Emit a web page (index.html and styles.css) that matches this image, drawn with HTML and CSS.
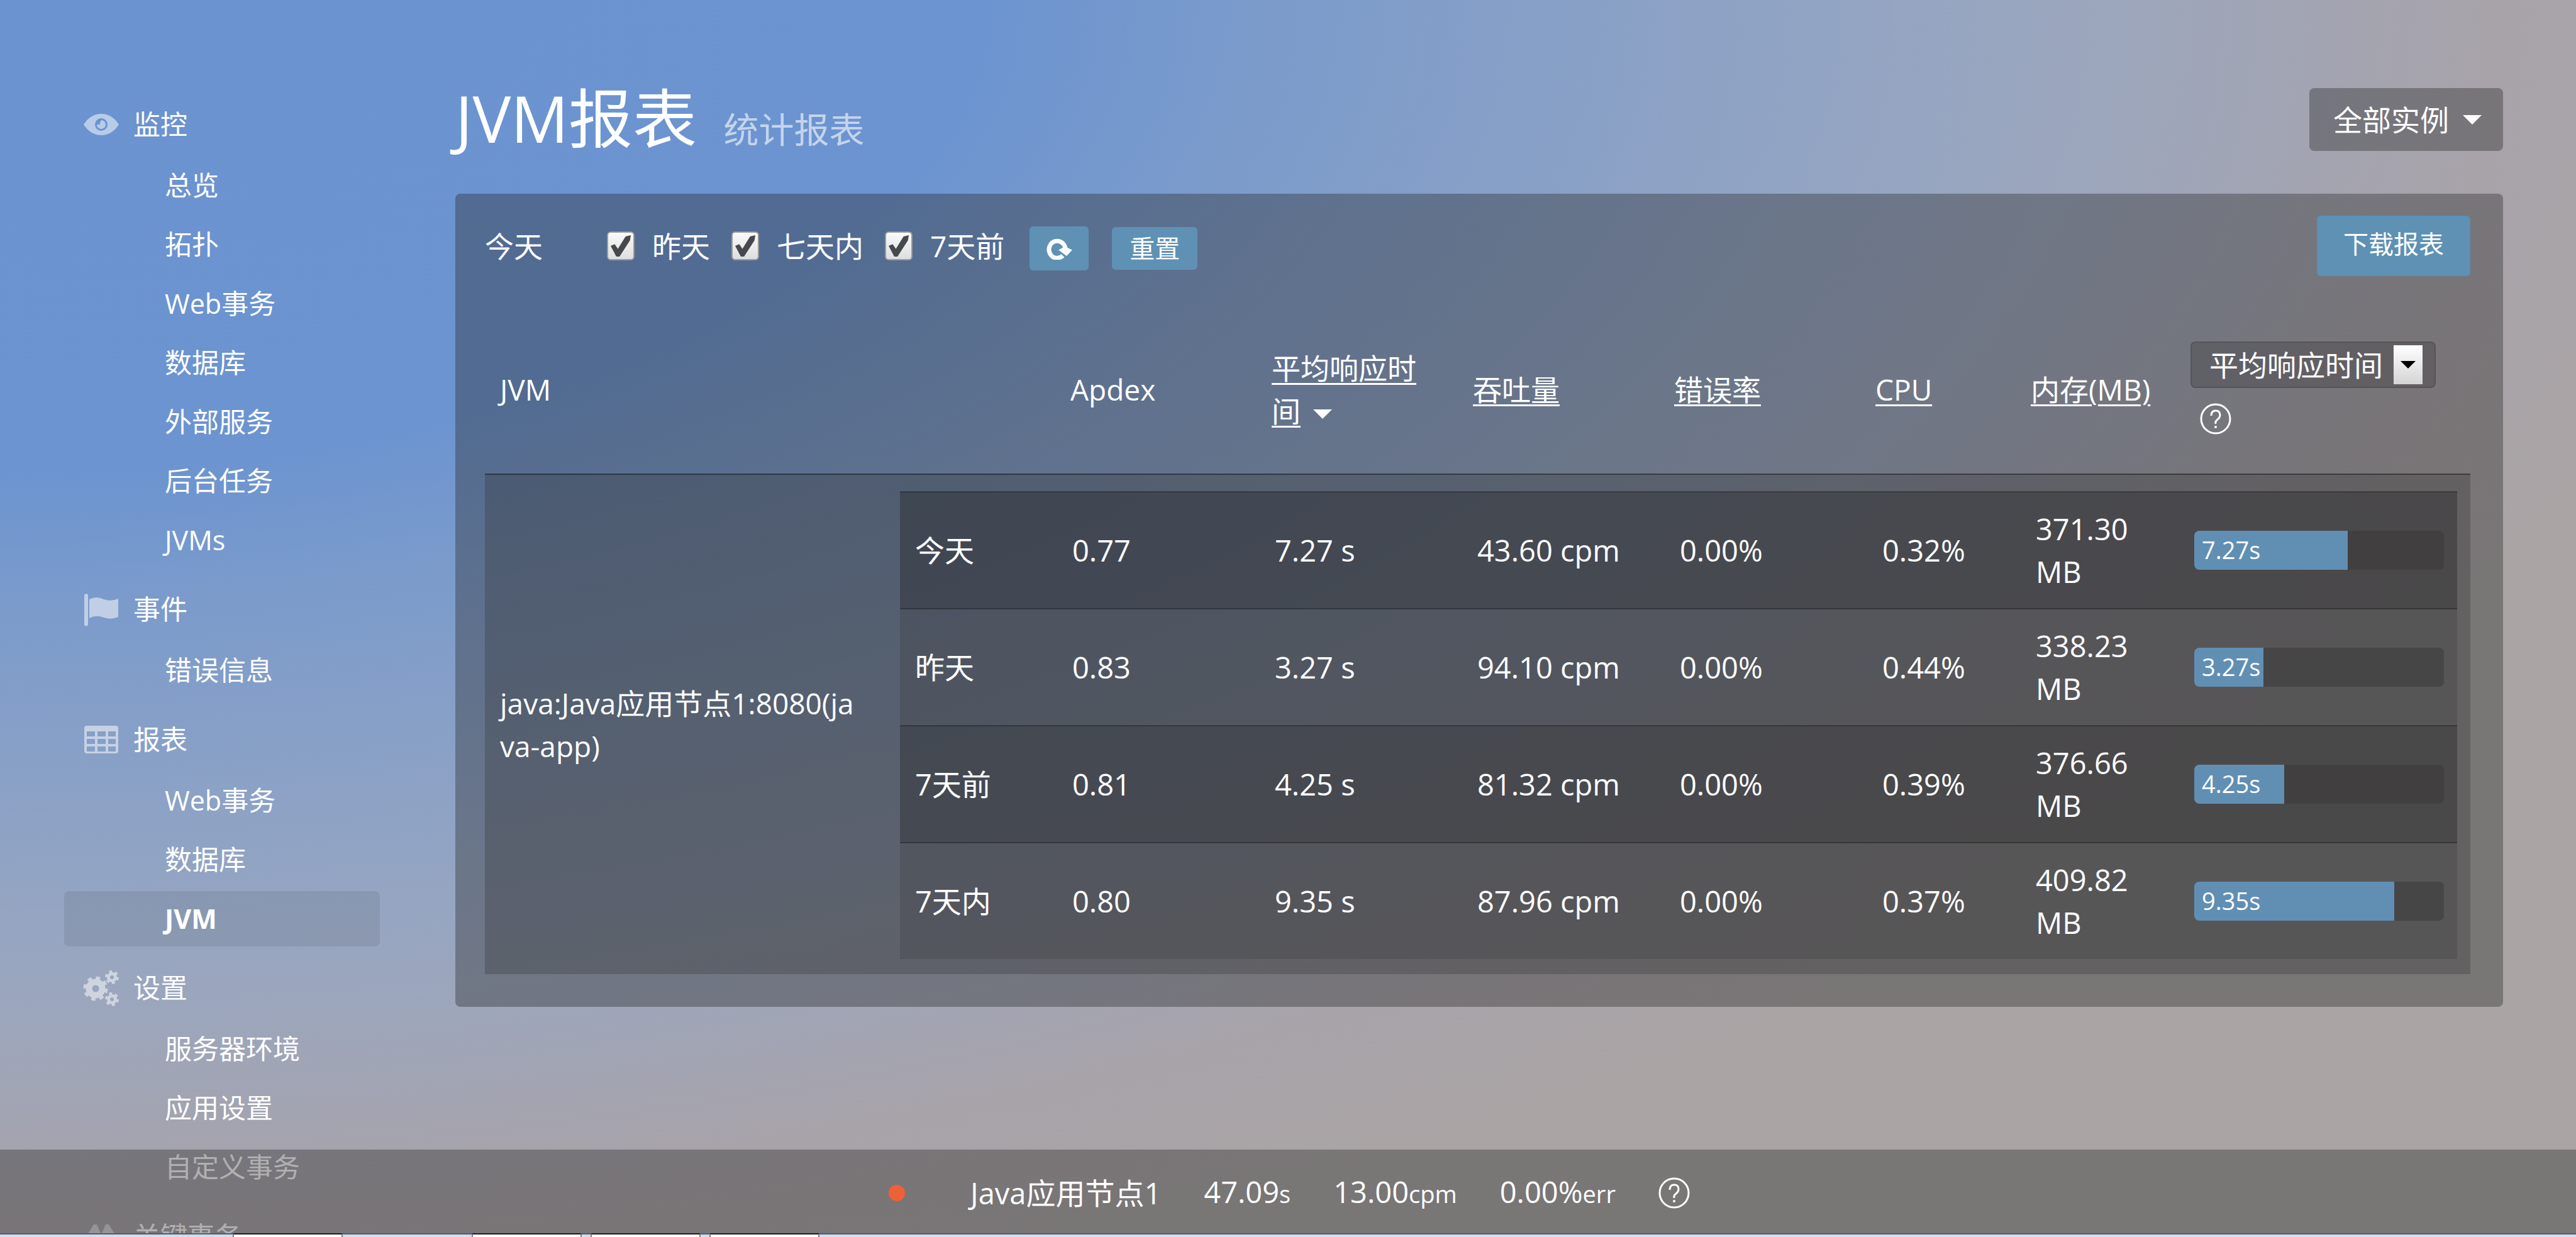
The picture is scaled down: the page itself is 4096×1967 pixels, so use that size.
FILE: index.html
```html
<!DOCTYPE html>
<html lang="zh-CN">
<head>
<meta charset="utf-8">
<title>JVM报表</title>
<link rel="stylesheet" href="styles.css">
</head>
<body>
<div class="viewport">
  <div class="layout">
    <nav class="sidebar">
      <section class="nav-group">
        <h2 class="nav-title">
          <svg class="nav-icon" viewBox="0 0 58 58"><path fill-rule="evenodd" d="M1 29Q12 12 29 12T57 29Q46 46 29 46T1 29ZM29 19a10 10 0 1 0 0 20a10 10 0 1 0 0-20ZM29 22a7 7 0 1 1 0 14a7 7 0 0 1-7-7h5v-3z"/></svg>
          监控
        </h2>
        <a class="nav-item" href="#">总览</a>
        <a class="nav-item" href="#">拓扑</a>
        <a class="nav-item" href="#">Web事务</a>
        <a class="nav-item" href="#">数据库</a>
        <a class="nav-item" href="#">外部服务</a>
        <a class="nav-item" href="#">后台任务</a>
        <a class="nav-item" href="#">JVMs</a>
      </section>
      <section class="nav-group">
        <h2 class="nav-title">
          <svg class="nav-icon" viewBox="0 0 58 58"><path d="M2 6q3-4 6 0v48q-3 3-6 0zM10 13q11-6 23 0q11 4 23-1v29q-11 5-23 1q-12-5-23 1z"/></svg>
          事件
        </h2>
        <a class="nav-item" href="#">错误信息</a>
      </section>
      <section class="nav-group">
        <h2 class="nav-title">
          <svg class="nav-icon" viewBox="0 0 58 58"><path fill-rule="evenodd" d="M6 7h46q4 0 4 4v36q0 4-4 4H6q-4 0-4-4V11q0-4 4-4ZM6 16v8h13v-8ZM23 16v8h13v-8ZM40 16v8h12v-8ZM6 28v8h13v-8ZM23 28v8h13v-8ZM40 28v8h12v-8ZM6 40v8h13v-8ZM23 40v8h13v-8ZM40 40v8h12v-8Z"/></svg>
          报表
        </h2>
        <a class="nav-item" href="#">Web事务</a>
        <a class="nav-item" href="#">数据库</a>
        <a class="nav-item nav-item-active" href="#">JVM</a>
      </section>
      <section class="nav-group">
        <h2 class="nav-title">
          <svg class="nav-icon" viewBox="0 0 58 58">
            <g fill="none" stroke="#fff">
              <circle cx="20" cy="30" r="10.500" stroke-width="10"/>
              <circle cx="20" cy="30" r="17" stroke-width="5" stroke-dasharray="6.700 6.650"/>
              <circle cx="46" cy="12" r="5.500" stroke-width="5"/>
              <circle cx="46" cy="12" r="9" stroke-width="4" stroke-dasharray="4.700 4.720"/>
              <circle cx="46" cy="47" r="5.500" stroke-width="5"/>
              <circle cx="46" cy="47" r="9" stroke-width="4" stroke-dasharray="4.700 4.720"/>
            </g>
          </svg>
          设置
        </h2>
        <a class="nav-item" href="#">服务器环境</a>
        <a class="nav-item" href="#">应用设置</a>
        <a class="nav-item" href="#">自定义事务</a>
      </section>
      <section class="nav-group">
        <h2 class="nav-title">
          <svg class="nav-icon" viewBox="0 0 58 58"><path d="M6 52V28L17 10h5l6 14v28zM30 52V24l6-14h5l11 18v24z"/></svg>
          关键事务
        </h2>
      </section>
    </nav>

    <main class="content">
      <header class="page-head">
        <h1 class="page-title">JVM报表 <small class="page-subtitle">统计报表</small></h1>
        <button class="instance-button" type="button">全部实例 <span class="caret"></span></button>
      </header>

      <section class="panel">
        <form class="toolbar">
          <span class="toolbar-today">今天</span>
          <label class="check"><input class="check-box" type="checkbox" checked>昨天</label>
          <label class="check"><input class="check-box" type="checkbox" checked>七天内</label>
          <label class="check"><input class="check-box" type="checkbox" checked>7天前</label>
          <button class="button button-refresh" type="button" aria-label="刷新">
            <svg class="refresh-icon" viewBox="0 0 42 36"><path d="M27 29.500A13 13.500 0 1 1 31 20" fill="none" stroke="#fff" stroke-width="7"/><path d="M20 20.500L30 15L42 20.500L33 30Z" fill="#fff"/></svg>
          </button>
          <button class="button button-reset" type="button">重置</button>
          <button class="button button-download" type="button">下载报表</button>
        </form>

        <table class="report">
          <colgroup>
            <col>
            <col class="col-lead">
            <col class="col-metric">
            <col class="col-metric">
            <col class="col-metric">
            <col class="col-metric">
            <col class="col-cpu">
            <col class="col-memory">
            <col class="col-chart">
          </colgroup>
          <thead>
            <tr>
              <th colspan="2">JVM</th>
              <th>Apdex</th>
              <th><a class="sort" href="#">平均响应时间</a> <span class="caret caret-sort"></span></th>
              <th><a class="sort" href="#">吞吐量</a></th>
              <th><a class="sort" href="#">错误率</a></th>
              <th><a class="sort" href="#">CPU</a></th>
              <th><a class="sort" href="#">内存(MB)</a></th>
              <th>
                <div class="chart-head">
                  <div class="metric-picker">
                    <select class="metric-select" aria-label="图表指标"><option>平均响应时间</option></select>
                    <span class="metric-arrow"></span>
                  </div>
                  <svg class="help-icon help-icon-inset" viewBox="0 0 50 50"><circle cx="25" cy="25" r="23" fill="none" stroke="#fff" stroke-width="3"/><path d="M18 20q0-8 7-8t7 7q0 4-4 7t-3 7" fill="none" stroke="#fff" stroke-width="3"/><circle cx="25" cy="38" r="2" fill="#fff"/></svg>
                </div>
              </th>
            </tr>
          </thead>
          <tbody>
            <tr class="report-row">
              <td class="jvm-name">java:Java应用节点1:8080(java-app)</td>
              <td class="periods-cell" colspan="8">
                <table class="periods">
                  <colgroup>
                    <col>
                    <col class="col-value">
                    <col class="col-value">
                    <col class="col-value">
                    <col class="col-value">
                    <col class="col-period-cpu">
                    <col class="col-period-memory">
                    <col class="col-period-chart">
                  </colgroup>
                  <tbody>
                    <tr><td>今天</td><td>0.77</td><td>7.27 s</td><td>43.60 cpm</td><td>0.00%</td><td>0.32%</td><td>371.30 MB</td><td><div class="bar"><div class="bar-fill" style="width:61.4%">7.27s</div></div></td></tr>
                    <tr><td>昨天</td><td>0.83</td><td>3.27 s</td><td>94.10 cpm</td><td>0.00%</td><td>0.44%</td><td>338.23 MB</td><td><div class="bar"><div class="bar-fill" style="width:27.7%">3.27s</div></div></td></tr>
                    <tr><td>7天前</td><td>0.81</td><td>4.25 s</td><td>81.32 cpm</td><td>0.00%</td><td>0.39%</td><td>376.66 MB</td><td><div class="bar"><div class="bar-fill" style="width:36%">4.25s</div></div></td></tr>
                    <tr><td>7天内</td><td>0.80</td><td>9.35 s</td><td>87.96 cpm</td><td>0.00%</td><td>0.37%</td><td>409.82 MB</td><td><div class="bar"><div class="bar-fill" style="width:80%">9.35s</div></div></td></tr>
                  </tbody>
                </table>
              </td>
            </tr>
          </tbody>
        </table>
      </section>
    </main>
  </div>

  <footer class="status">
    <span class="status-dot"></span>
    <span>Java应用节点1</span>
    <span>47.09<span class="unit">s</span></span>
    <span>13.00<span class="unit">cpm</span></span>
    <span>0.00%<span class="unit">err</span></span>
    <svg class="help-icon" viewBox="0 0 50 50"><circle cx="25" cy="25" r="23" fill="none" stroke="#fff" stroke-width="3"/><path d="M18 20q0-8 7-8t7 7q0 4-4 7t-3 7" fill="none" stroke="#fff" stroke-width="3"/><circle cx="25" cy="38" r="2" fill="#fff"/></svg>
  </footer>
</div>
<div class="taskbar">
  <span class="task task-first"></span>
  <span class="task"></span>
  <span class="task"></span>
  <span class="task"></span>
</div>
</body>
</html>
```
FILE: styles.css
```css
* {
  box-sizing: border-box;
}

body {
  margin: 0;
  height: 100vh;
  display: flex;
  flex-direction: column;
  overflow: hidden;
  font: 46px/68px "Open Sans", "Noto Sans CJK SC", sans-serif;
  color: #fff;
  background: radial-gradient(ellipse 100% 100% at 0 0,
    #6b93cf 0%, #6c94d0 38%, #7b9bcb 49%, #8aa1c6 63%,
    #95a5c2 74%, #9ba6bd 81%, #a2a4b2 90%, #a8a3a9 97%, #aaa4a5 108%);
}

a {
  color: inherit;
  text-decoration: none;
}

button,
select {
  font: inherit;
  color: inherit;
  border: 0;
}

/* Page frame */
.viewport {
  position: relative;
  flex: 1;
  min-height: 0;
  overflow: hidden;
}

.layout {
  display: grid;
  grid-template-columns: 502px minmax(0, 1fr);
  gap: 120px;
  align-items: start;
  padding: 140px 116px 0 102px;
}

/* Sidebar */
.sidebar {
  display: flex;
  flex-direction: column;
  gap: 13px;
  padding-top: 8px;
  font-size: 43px;
}

.nav-group {
  display: flex;
  flex-direction: column;
}

.nav-title {
  display: flex;
  align-items: center;
  gap: 22px;
  height: 100px;
  margin: 0;
  padding-left: 30px;
  font-size: 43px;
  font-weight: 400;
}

.nav-icon {
  width: 58px;
  height: 58px;
  fill: #fff;
  opacity: 0.52;
}

.nav-item {
  display: flex;
  align-items: center;
  height: 88px;
  margin: 3px 0;
  padding-left: 160px;
  border-radius: 8px;
}

.nav-item-active {
  background: rgba(0, 0, 0, 0.08);
  font-weight: 700;
}

/* Page heading */
.page-head {
  display: flex;
  align-items: center;
  justify-content: space-between;
  height: 100px;
  margin-bottom: 68px;
}

.page-title {
  margin: 0;
  padding-top: 12px;
  font-size: 102px;
  font-weight: 400;
  line-height: 100px;
}

.page-subtitle {
  margin-left: 16px;
  font-size: 56px;
  color: rgba(255, 255, 255, 0.6);
}

.instance-button {
  display: flex;
  align-items: center;
  gap: 22px;
  height: 100px;
  padding: 0 34px 0 38px;
  border-radius: 8px;
  background: rgba(37, 37, 37, 0.36);
}

.caret {
  display: inline-block;
  border: 15px solid transparent;
  border-top-color: #fff;
  border-bottom: 0;
  vertical-align: middle;
}

.caret-sort {
  margin-left: 8px;
}

/* Report panel */
.panel {
  padding: 35px 52px 52px 47px;
  border-radius: 8px;
  background: rgba(37, 37, 37, 0.36);
}

.toolbar {
  display: flex;
  align-items: center;
  height: 96px;
}

.toolbar-today {
  margin-right: 102px;
}

.check {
  display: flex;
  align-items: center;
  gap: 28px;
  margin-right: 34px;
}

.check-box {
  appearance: none;
  display: grid;
  place-items: center;
  width: 44px;
  height: 46px;
  margin: 0;
  border: 2px solid #9a9a9a;
  border-radius: 6px;
  background: linear-gradient(#fafafa, #dedede);
}

.check-box:checked::after {
  content: "";
  width: 32px;
  height: 34px;
  background: #45484c;
  clip-path: polygon(0 50%, 20% 42%, 36% 64%, 74% 6%, 100% 0, 96% 24%, 44% 100%, 28% 100%);
}

.button {
  border-radius: 6px;
  background: #5e91b4;
  font-size: 40px;
}

.button-refresh {
  display: grid;
  place-items: center;
  width: 94px;
  height: 70px;
  margin-left: 6px;
  margin-top: 8px;
  padding: 0;
}

.refresh-icon {
  width: 42px;
  height: 36px;
}

.button-reset {
  height: 68px;
  margin-left: 37px;
  margin-top: 8px;
  padding: 0 28px;
}

.button-download {
  height: 96px;
  margin-left: auto;
  padding: 0 40px 6px;
  border: 2px solid #5592b9;
}

/* Outer table */
.report,
.periods {
  width: 100%;
  border-collapse: collapse;
  table-layout: fixed;
}

.report {
  margin-top: 51px;
}

.report th {
  height: 264px;
  padding: 0 24px 6px;
  font-weight: 400;
  text-align: left;
  vertical-align: middle;
}

.report td {
  padding: 24px;
  vertical-align: middle;
}

.col-lead {
  width: 271px;
}

.col-metric {
  width: 320px;
}

.col-cpu {
  width: 247px;
}

.col-memory {
  width: 254px;
}

.col-chart {
  width: 469px;
}

.sort {
  text-decoration: underline;
  text-decoration-thickness: 3px;
  text-underline-offset: 6px;
}

.report-row {
  border-top: 2px solid rgba(0, 0, 0, 0.45);
  background: rgba(50, 50, 50, 0.3);
}

.report .jvm-name {
  padding-right: 48px;
  word-break: break-all;
}

.report .periods-cell {
  padding: 26px 21px 24px 24px;
}

/* Metric picker in the chart column */
.chart-head {
  display: flex;
  flex-direction: column;
  gap: 24px;
  margin-top: -4px;
}

.metric-picker {
  display: flex;
  align-items: center;
  width: 390px;
  height: 74px;
  border: 2px solid rgba(0, 0, 0, 0.12);
  border-radius: 8px;
  background: rgba(50, 48, 50, 0.3);
}

.metric-select {
  appearance: none;
  flex: 1;
  min-width: 0;
  padding: 0 0 0 28px;
  background: transparent;
}

.metric-arrow {
  display: grid;
  place-items: center;
  width: 46px;
  height: 62px;
  margin-right: 19px;
  background: linear-gradient(#fff, #d4d4d4);
}

.metric-arrow::after {
  content: "";
  border: 12px solid transparent;
  border-top-color: #000;
  border-bottom: 0;
}

.help-icon {
  width: 50px;
  height: 50px;
}

.help-icon-inset {
  margin-left: 15px;
}

/* Nested table, one row per period */
.periods {
  font-size: 47px;
}

.periods tr {
  border-top: 2px solid rgba(0, 0, 0, 0.3);
  background: rgba(58, 58, 60, 0.28);
}

.periods tr:nth-child(odd) {
  background: rgba(38, 38, 40, 0.4);
}

.col-value {
  width: 322px;
}

.col-period-cpu {
  width: 244px;
}

.col-period-memory {
  width: 252px;
}

.col-period-chart {
  width: 442px;
}

.report .periods td:last-child {
  padding-right: 21px;
}

.bar {
  height: 62px;
  border-radius: 8px;
  overflow: hidden;
  background: rgba(56, 53, 54, 0.5);
}

.bar-fill {
  height: 62px;
  padding-left: 12px;
  background: #618fb3;
  font-size: 38px;
  line-height: 60px;
}

/* Status bar over the foot of the page */
.status {
  position: absolute;
  right: 0;
  bottom: 0;
  left: 0;
  display: flex;
  align-items: center;
  justify-content: center;
  gap: 68px;
  height: 133px;
  padding: 4px 0 0 4px;
  background: rgba(37, 37, 37, 0.36);
  font-size: 47px;
}

.status-dot {
  width: 26px;
  height: 26px;
  margin-right: 36px;
  border-radius: 50%;
  background: #ee6036;
}

.unit {
  font-size: 38px;
}

/* Desktop strip below the page */
.taskbar {
  display: flex;
  gap: 14px;
  height: 6px;
  padding-left: 370px;
  border-top: 2px solid #4f5d6b;
  background: #cddff0;
}

.task {
  width: 175px;
  margin-top: -2px;
  border: 2px solid #76818c;
  border-top-color: #1c1c22;
  border-bottom: 0;
  background: #fff;
}

.task-first {
  margin-right: 191px;
}
```
